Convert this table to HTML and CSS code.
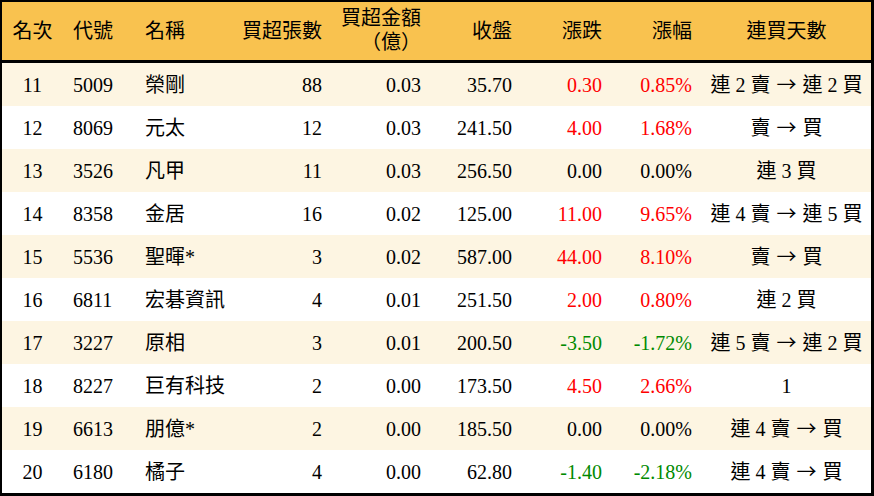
FILE: index.html
```html
<!DOCTYPE html>
<html lang="zh-Hant">
<head>
<meta charset="utf-8">
<title>買超排行</title>
<link rel="stylesheet" href="styles.css">
</head>
<body>
<div class="board">
  <div class="row head">
    <div class="c center">名次</div>
    <div class="c left">代號</div>
    <div class="c left">名稱</div>
    <div class="c right">買超張數</div>
    <div class="c right two"><span>買超金額</span><span>（億）</span></div>
    <div class="c right">收盤</div>
    <div class="c right">漲跌</div>
    <div class="c right">漲幅</div>
    <div class="c center">連買天數</div>
  </div>
  <div class="row odd">
    <div class="c center">11</div><div class="c left">5009</div><div class="c left">榮剛</div>
    <div class="c right">88</div><div class="c right">0.03</div><div class="c right">35.70</div>
    <div class="c right up">0.30</div><div class="c right up">0.85%</div><div class="c center"><span>連 2 賣 <span class="arrow">→</span> 連 2 買</span></div>
  </div>
  <div class="row">
    <div class="c center">12</div><div class="c left">8069</div><div class="c left">元太</div>
    <div class="c right">12</div><div class="c right">0.03</div><div class="c right">241.50</div>
    <div class="c right up">4.00</div><div class="c right up">1.68%</div><div class="c center"><span>賣 <span class="arrow">→</span> 買</span></div>
  </div>
  <div class="row odd">
    <div class="c center">13</div><div class="c left">3526</div><div class="c left">凡甲</div>
    <div class="c right">11</div><div class="c right">0.03</div><div class="c right">256.50</div>
    <div class="c right">0.00</div><div class="c right">0.00%</div><div class="c center">連 3 買</div>
  </div>
  <div class="row">
    <div class="c center">14</div><div class="c left">8358</div><div class="c left">金居</div>
    <div class="c right">16</div><div class="c right">0.02</div><div class="c right">125.00</div>
    <div class="c right up">11.00</div><div class="c right up">9.65%</div><div class="c center"><span>連 4 賣 <span class="arrow">→</span> 連 5 買</span></div>
  </div>
  <div class="row odd">
    <div class="c center">15</div><div class="c left">5536</div><div class="c left">聖暉*</div>
    <div class="c right">3</div><div class="c right">0.02</div><div class="c right">587.00</div>
    <div class="c right up">44.00</div><div class="c right up">8.10%</div><div class="c center"><span>賣 <span class="arrow">→</span> 買</span></div>
  </div>
  <div class="row">
    <div class="c center">16</div><div class="c left">6811</div><div class="c left">宏碁資訊</div>
    <div class="c right">4</div><div class="c right">0.01</div><div class="c right">251.50</div>
    <div class="c right up">2.00</div><div class="c right up">0.80%</div><div class="c center">連 2 買</div>
  </div>
  <div class="row odd">
    <div class="c center">17</div><div class="c left">3227</div><div class="c left">原相</div>
    <div class="c right">3</div><div class="c right">0.01</div><div class="c right">200.50</div>
    <div class="c right down">-3.50</div><div class="c right down">-1.72%</div><div class="c center"><span>連 5 賣 <span class="arrow">→</span> 連 2 買</span></div>
  </div>
  <div class="row">
    <div class="c center">18</div><div class="c left">8227</div><div class="c left">巨有科技</div>
    <div class="c right">2</div><div class="c right">0.00</div><div class="c right">173.50</div>
    <div class="c right up">4.50</div><div class="c right up">2.66%</div><div class="c center">1</div>
  </div>
  <div class="row odd">
    <div class="c center">19</div><div class="c left">6613</div><div class="c left">朋億*</div>
    <div class="c right">2</div><div class="c right">0.00</div><div class="c right">185.50</div>
    <div class="c right">0.00</div><div class="c right">0.00%</div><div class="c center"><span>連 4 賣 <span class="arrow">→</span> 買</span></div>
  </div>
  <div class="row">
    <div class="c center">20</div><div class="c left">6180</div><div class="c left">橘子</div>
    <div class="c right">4</div><div class="c right">0.00</div><div class="c right">62.80</div>
    <div class="c right down">-1.40</div><div class="c right down">-2.18%</div><div class="c center"><span>連 4 賣 <span class="arrow">→</span> 買</span></div>
  </div>
</div>
</body>
</html>
```
FILE: styles.css
```css
html, body {
  margin: 0;
  padding: 0;
  background: #ffffff;
}

.board {
  width: 874px;
  height: 496px;
  box-sizing: border-box;
  border-style: solid;
  border-color: #000000;
  border-width: 2px 3px 3px 2px;
  font-family: "Liberation Serif", "Noto Sans CJK TC", serif;
  font-size: 20px;
  color: #000000;
  background: #ffffff;
}

.row {
  display: grid;
  grid-template-columns: 61px 72px 105px 92px 99px 91px 90px 90px 169px;
  height: 43px;
}

.row.odd {
  background: #fdf5e2;
}

.row.head {
  height: 58px;
  background: #f9c24f;
  border-bottom: 3px solid #000000;
}

.c {
  display: flex;
  flex-direction: column;
  justify-content: center;
  line-height: 24px;
  white-space: nowrap;
}

.c.left {
  align-items: flex-start;
  padding-left: 10px;
}

.c.right {
  align-items: flex-end;
  padding-right: 10px;
}

.c.center {
  align-items: center;
}

.c.two {
  line-height: 24px;
  padding-bottom: 2px;
}

.arrow {
  font-family: "Noto Sans CJK TC", sans-serif;
  display: inline-block;
  width: 22px;
  text-align: center;
  line-height: 24px;
}

.up {
  color: #ff0000;
}

.down {
  color: #008a00;
}
```
